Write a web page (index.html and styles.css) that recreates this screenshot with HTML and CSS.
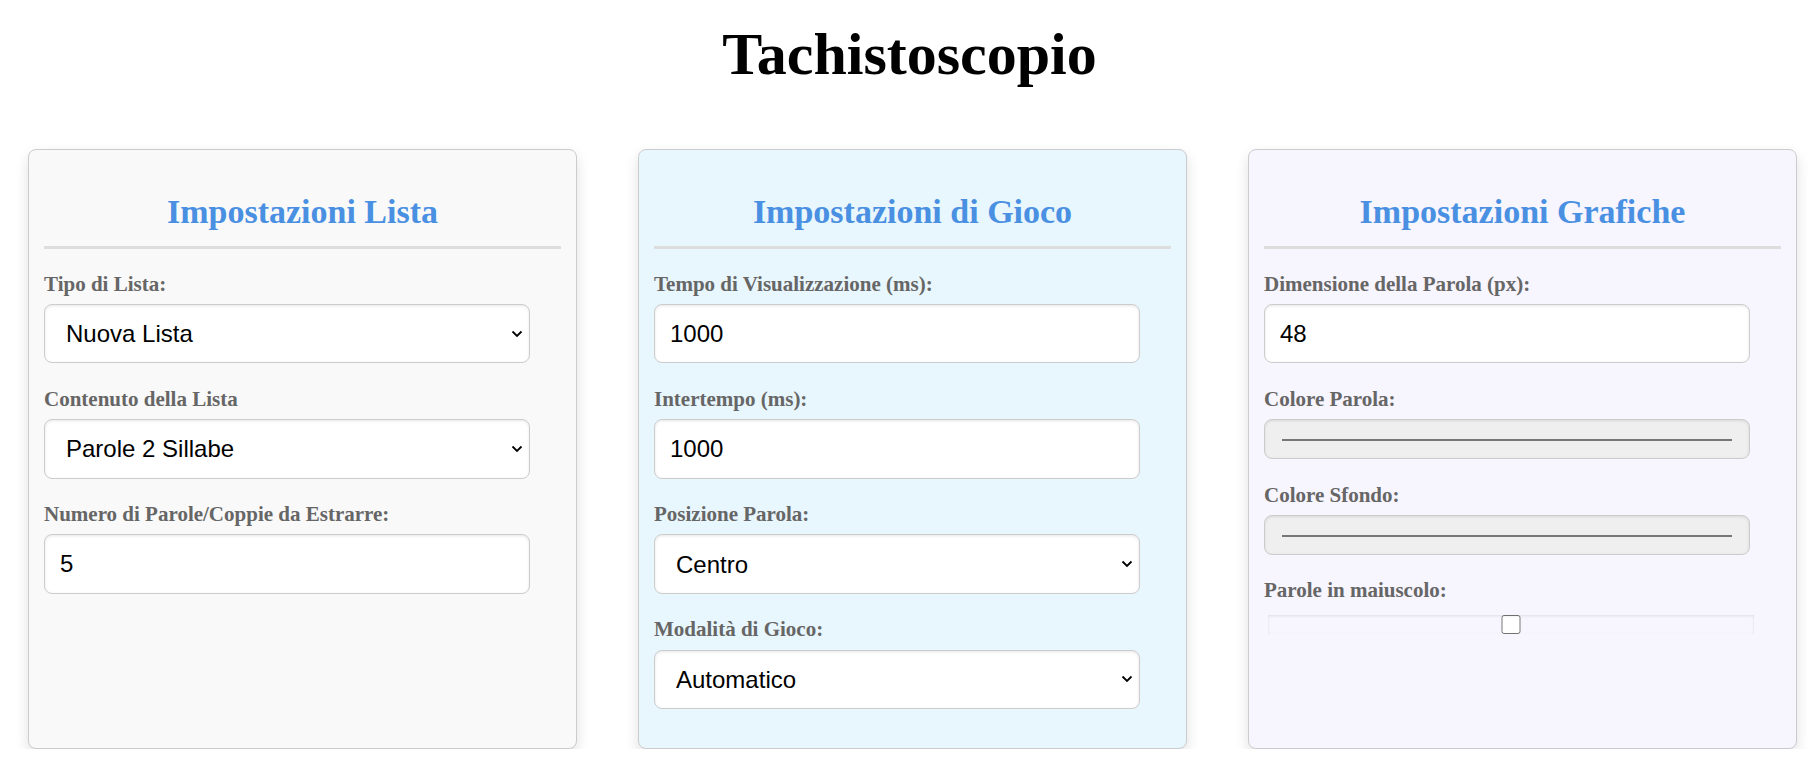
FILE: index.html
```html
<!DOCTYPE html>
<html lang="it">
<head>
<meta charset="utf-8">
<title>Tachistoscopio</title>
<link rel="stylesheet" href="styles.css">
</head>
<body>
<h1 class="title">Tachistoscopio</h1>
<div class="panels">
  <section class="card card-list">
    <h2 class="card-title">Impostazioni Lista</h2>
    <div class="field">
      <label class="field-label">Tipo di Lista:</label>
      <div class="select-wrap">
        <select class="control control-select"><option>Nuova Lista</option></select>
        <svg class="chevron" viewBox="0 0 12 8" width="12" height="8"><path d="M1.5 1.5 L6 6 L10.5 1.5" fill="none" stroke="#000" stroke-width="1.8"/></svg>
      </div>
    </div>
    <div class="field">
      <label class="field-label">Contenuto della Lista</label>
      <div class="select-wrap">
        <select class="control control-select"><option>Parole 2 Sillabe</option></select>
        <svg class="chevron" viewBox="0 0 12 8" width="12" height="8"><path d="M1.5 1.5 L6 6 L10.5 1.5" fill="none" stroke="#000" stroke-width="1.8"/></svg>
      </div>
    </div>
    <div class="field">
      <label class="field-label">Numero di Parole/Coppie da Estrarre:</label>
      <input class="control" type="text" value="5">
    </div>
  </section>
  <section class="card card-game">
    <h2 class="card-title">Impostazioni di Gioco</h2>
    <div class="field">
      <label class="field-label">Tempo di Visualizzazione (ms):</label>
      <input class="control" type="text" value="1000">
    </div>
    <div class="field">
      <label class="field-label">Intertempo (ms):</label>
      <input class="control" type="text" value="1000">
    </div>
    <div class="field">
      <label class="field-label">Posizione Parola:</label>
      <div class="select-wrap">
        <select class="control control-select"><option>Centro</option></select>
        <svg class="chevron" viewBox="0 0 12 8" width="12" height="8"><path d="M1.5 1.5 L6 6 L10.5 1.5" fill="none" stroke="#000" stroke-width="1.8"/></svg>
      </div>
    </div>
    <div class="field">
      <label class="field-label">Modalità di Gioco:</label>
      <div class="select-wrap">
        <select class="control control-select"><option>Automatico</option></select>
        <svg class="chevron" viewBox="0 0 12 8" width="12" height="8"><path d="M1.5 1.5 L6 6 L10.5 1.5" fill="none" stroke="#000" stroke-width="1.8"/></svg>
      </div>
    </div>
  </section>
  <section class="card card-graphics">
    <h2 class="card-title">Impostazioni Grafiche</h2>
    <div class="field">
      <label class="field-label">Dimensione della Parola (px):</label>
      <input class="control" type="text" value="48">
    </div>
    <div class="field">
      <label class="field-label">Colore Parola:</label>
      <input class="control control-color" type="color" value="#000000">
    </div>
    <div class="field">
      <label class="field-label">Colore Sfondo:</label>
      <input class="control control-color" type="color" value="#ffffff">
    </div>
    <div class="field">
      <label class="field-label">Parole in maiuscolo:</label>
      <input class="control-check" type="checkbox">
    </div>
  </section>
</div>
</body>
</html>
```

FILE: styles.css
```css
html, body {
  margin: 0;
  padding: 0;
  background: #ffffff;
}

body {
  font-family: "Liberation Serif", "Times New Roman", serif;
  color: #000;
}

.title {
  margin: 20px 0 0;
  font-size: 60px;
  line-height: 1.15;
  font-weight: bold;
  text-align: center;
}

.panels {
  display: flex;
  gap: 61px;
  padding: 0 22px 0 28px;
  margin-top: 60px;
  align-items: stretch;
}

.card {
  flex: 1 1 0;
  min-width: 0;
  border: 1px solid #cccccc;
  border-radius: 8px;
  padding: 15px;
  box-shadow: 0 6px 14px rgba(0, 0, 0, 0.12);
}

.card-list { background: #f9f9f9; }
.card-game { background: #e8f6fd; }
.card-graphics { background: #f7f5fe; }

.card-title {
  margin: 28px 0 23px;
  padding-bottom: 15px;
  border-bottom: 3px solid #dddddd;
  font-size: 34px;
  line-height: 1.107;
  font-weight: bold;
  color: #4a90e2;
  text-align: center;
}

.field {
  margin-bottom: 23.5px;
}

.field-label {
  display: block;
  margin-bottom: 8px;
  font-size: 21px;
  line-height: 24.15px;
  font-weight: bold;
  color: #666666;
}

.control {
  display: block;
  box-sizing: border-box;
  width: 94%;
  height: 59.6px;
  margin: 0;
  padding: 15px;
  border: 1px solid #cccccc;
  border-radius: 8px;
  background: #ffffff;
  box-shadow: inset 0 1px 3px rgba(0, 0, 0, 0.1);
  font-family: "Liberation Sans", Arial, sans-serif;
  font-size: 24px;
  color: #000;
}

.select-wrap {
  position: relative;
  width: 94%;
}

.control-select {
  width: 100%;
  -webkit-appearance: none;
  appearance: none;
  padding-left: 21px;
  padding-right: 36px;
}

.chevron {
  position: absolute;
  right: 7px;
  top: 50%;
  margin-top: -4px;
  pointer-events: none;
}

.control-color {
  height: 40px;
  background: #efefef;
  cursor: pointer;
}

.control-check {
  display: block;
  box-sizing: border-box;
  width: 94%;
  height: 19px;
  margin: 13px 3px 3px 4px;
  box-shadow: inset 0 1px 3px rgba(0, 0, 0, 0.1);
}
```
